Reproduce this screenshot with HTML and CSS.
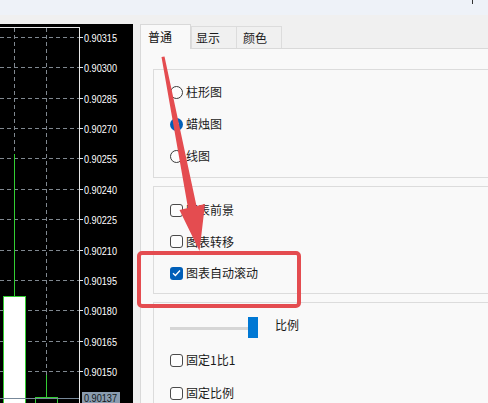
FILE: index.html
```html
<!DOCTYPE html>
<html lang="zh-CN">
<head>
<meta charset="utf-8">
<title>图表属性</title>
<link rel="stylesheet" href="styles.css">
</head>
<body>
<div class="topbar"><span class="topmark"></span></div>
<div class="main">
  <div class="chart">
    <svg width="133" height="379" viewBox="0 0 133 379" xmlns="http://www.w3.org/2000/svg">
      <rect x="0" y="0" width="133" height="379" fill="#000"/>
      <g stroke="#808890" stroke-width="1" stroke-dasharray="4 3">
        <line x1="0" y1="13.5" x2="79" y2="13.5"/>
        <line x1="0" y1="43.5" x2="79" y2="43.5"/>
        <line x1="0" y1="74.5" x2="79" y2="74.5"/>
        <line x1="0" y1="104.5" x2="79" y2="104.5"/>
        <line x1="0" y1="134.5" x2="79" y2="134.5"/>
        <line x1="0" y1="165.5" x2="79" y2="165.5"/>
        <line x1="0" y1="195.5" x2="79" y2="195.5"/>
        <line x1="0" y1="226.5" x2="79" y2="226.5"/>
        <line x1="0" y1="256.5" x2="79" y2="256.5"/>
        <line x1="0" y1="286.5" x2="79" y2="286.5"/>
        <line x1="0" y1="317.5" x2="79" y2="317.5"/>
        <line x1="0" y1="347.5" x2="79" y2="347.5"/>
        <line x1="14.5" y1="4" x2="14.5" y2="379"/>
        <line x1="46.5" y1="4" x2="46.5" y2="379"/>
      </g>
      <g stroke="#32cd32" stroke-width="1">
        <line x1="14.5" y1="130" x2="14.5" y2="272"/>
        <rect x="3.5" y="272.5" width="22" height="120" fill="#fff"/>
        <line x1="46.5" y1="351" x2="46.5" y2="373"/>
        <rect x="35.5" y="373.5" width="22" height="20" fill="#000"/>
      </g>
      <line x1="0" y1="374.5" x2="79" y2="374.5" stroke="#778899"/>
      <g stroke="#e8e8e8" stroke-width="1">
        <line x1="0" y1="3.5" x2="80" y2="3.5"/>
        <line x1="79.5" y1="3" x2="79.5" y2="379"/>
        <line x1="79" y1="13.5" x2="83" y2="13.5"/>
        <line x1="79" y1="43.5" x2="83" y2="43.5"/>
        <line x1="79" y1="74.5" x2="83" y2="74.5"/>
        <line x1="79" y1="104.5" x2="83" y2="104.5"/>
        <line x1="79" y1="134.5" x2="83" y2="134.5"/>
        <line x1="79" y1="165.5" x2="83" y2="165.5"/>
        <line x1="79" y1="195.5" x2="83" y2="195.5"/>
        <line x1="79" y1="226.5" x2="83" y2="226.5"/>
        <line x1="79" y1="256.5" x2="83" y2="256.5"/>
        <line x1="79" y1="286.5" x2="83" y2="286.5"/>
        <line x1="79" y1="317.5" x2="83" y2="317.5"/>
        <line x1="79" y1="347.5" x2="83" y2="347.5"/>
      </g>
      <g fill="#fff" font-family="Liberation Sans, Arial, sans-serif" font-size="10">
        <text x="84" y="17.5" textLength="33" lengthAdjust="spacingAndGlyphs">0.90315</text>
        <text x="84" y="47.5" textLength="33" lengthAdjust="spacingAndGlyphs">0.90300</text>
        <text x="84" y="78.5" textLength="33" lengthAdjust="spacingAndGlyphs">0.90285</text>
        <text x="84" y="108.5" textLength="33" lengthAdjust="spacingAndGlyphs">0.90270</text>
        <text x="84" y="138.5" textLength="33" lengthAdjust="spacingAndGlyphs">0.90255</text>
        <text x="84" y="169.5" textLength="33" lengthAdjust="spacingAndGlyphs">0.90240</text>
        <text x="84" y="199.5" textLength="33" lengthAdjust="spacingAndGlyphs">0.90225</text>
        <text x="84" y="230.5" textLength="33" lengthAdjust="spacingAndGlyphs">0.90210</text>
        <text x="84" y="260.5" textLength="33" lengthAdjust="spacingAndGlyphs">0.90195</text>
        <text x="84" y="290.5" textLength="33" lengthAdjust="spacingAndGlyphs">0.90180</text>
        <text x="84" y="321.5" textLength="33" lengthAdjust="spacingAndGlyphs">0.90165</text>
        <text x="84" y="351.5" textLength="33" lengthAdjust="spacingAndGlyphs">0.90150</text>
      </g>
      <rect x="82" y="368" width="38" height="11" fill="#8a9caf"/>
      <text x="84" y="378" fill="#101820" font-family="Liberation Sans, Arial, sans-serif" font-size="10" textLength="33" lengthAdjust="spacingAndGlyphs">0.90137</text>
    </svg>
  </div>
  <div class="dialog">
    <div class="tabs">
      <div class="tab tab-active">普通</div>
      <div class="tab tab-2">显示</div>
      <div class="tab tab-3">颜色</div>
    </div>
    <div class="panel">
      <div class="group group-type">
        <div class="opt"><span class="radio"></span><span class="label">柱形图</span></div>
        <div class="opt"><span class="radio radio-on"></span><span class="label">蜡烛图</span></div>
        <div class="opt"><span class="radio"></span><span class="label">线图</span></div>
      </div>
      <div class="group group-flags">
        <div class="opt"><span class="check"></span><span class="label">图表前景</span></div>
        <div class="opt"><span class="check"></span><span class="label">图表转移</span></div>
        <div class="opt"><span class="check check-on"><svg width="9" height="8" viewBox="0 0 9 8"><path d="M1 4.2 L3.4 6.5 L8 1.5" fill="none" stroke="#fff" stroke-width="1.3"/></svg></span><span class="label">图表自动滚动</span></div>
      </div>
      <div class="group group-scale">
        <div class="slider-row">
          <div class="slider"><span class="track"></span><span class="thumb"></span></div>
          <span class="label slider-label">比例</span>
        </div>
        <div class="opt opt-fix1"><span class="check"></span><span class="label">固定1比1</span></div>
        <div class="opt opt-fix2"><span class="check"></span><span class="label">固定比例</span></div>
      </div>
    </div>
  </div>
</div>
<svg class="annot" width="488" height="403" viewBox="0 0 488 403" xmlns="http://www.w3.org/2000/svg">
  <rect x="139" y="253" width="160" height="53" rx="3" fill="none" stroke="#e44c50" stroke-width="4"/>
  <polygon points="161.5,57 164.5,56.5 196.5,206 205,204 199.5,251 179.5,210 188,208" fill="#e44c50"/>
</svg>
</body>
</html>
```
FILE: styles.css
```css
html, body {
  margin: 0;
  padding: 0;
}
body {
  width: 488px;
  height: 403px;
  overflow: hidden;
  background: #f0f0f0;
  font-family: "Noto Sans CJK SC", "Noto Sans", sans-serif;
  font-size: 12px;
  color: #1a1a1a;
  position: relative;
}
.topbar {
  height: 15px;
  background: #eef2f8;
  display: flex;
  padding-left: 472px;
  box-sizing: border-box;
}
.topmark {
  width: 1px;
  height: 4px;
  background: #333;
}
.main {
  display: flex;
  height: 388px;
}
.chart {
  width: 133px;
  height: 379px;
  margin-top: 9px;
  background: #000;
  flex: none;
}
.chart svg {
  display: block;
}
.dialog {
  margin-left: 7px;
  margin-top: 9px;
  flex: 1;
  min-width: 0;
  display: flex;
  flex-direction: column;
}
.tabs {
  display: flex;
  align-items: flex-end;
  height: 24px;
  flex: none;
}
.tab {
  box-sizing: border-box;
  height: 22px;
  border: 1px solid #dcdcdc;
  border-bottom: none;
  background: #f0f0f0;
  display: flex;
  align-items: center;
  padding-left: 6px;
  line-height: 16px;
}
.tab-active {
  width: 51px;
  height: 25px;
  margin-bottom: -1px;
  background: #f9f9f9;
  border-color: #d9d9d9;
  padding-left: 7px;
  position: relative;
  z-index: 1;
  color: #111;
}
.tab-2 {
  width: 46px;
  padding-left: 4px;
}
.tab-3 {
  width: 46px;
  margin-left: -1px;
}
.panel {
  flex: 1;
  background: #f9f9f9;
  border-top: 1px solid #d9d9d9;
  border-left: 1px solid #d9d9d9;
  padding: 20px 0 0 12px;
  overflow: hidden;
}
.group {
  box-sizing: border-box;
  width: 420px;
  border: 1px solid #dcdcdc;
  padding-left: 16px;
  display: flex;
  flex-direction: column;
}
.group-type {
  height: 109px;
  padding-top: 14px;
  gap: 16px;
}
.group-flags {
  height: 108px;
  margin-top: 8px;
  padding-top: 15px;
  gap: 15.5px;
}
.group-scale {
  height: 120px;
  margin-top: 8px;
  padding-top: 14px;
}
.opt {
  display: flex;
  align-items: center;
  height: 16px;
  gap: 3px;
  line-height: 16px;
}
.radio {
  box-sizing: border-box;
  width: 13px;
  height: 13px;
  border-radius: 50%;
  border: 1px solid #3a3a3a;
  background: #fdfdfd;
  flex: none;
}
.radio-on {
  border: none;
  background: #005fb8;
  display: flex;
  align-items: center;
  justify-content: center;
}
.radio-on::after {
  content: "";
  width: 5px;
  height: 5px;
  border-radius: 50%;
  background: #fff;
}
.check {
  box-sizing: border-box;
  width: 13px;
  height: 13px;
  border-radius: 3px;
  border: 1px solid #4a4a4a;
  background: #fdfdfd;
  flex: none;
  display: flex;
  align-items: center;
  justify-content: center;
}
.check-on {
  border: none;
  background: #005fb8;
}
.check-on svg {
  display: block;
}
.slider-row {
  display: flex;
  align-items: center;
  height: 21px;
}
.slider {
  position: relative;
  width: 88px;
  height: 21px;
  display: flex;
  align-items: center;
}
.track {
  width: 88px;
  height: 3px;
  background: #d6d6d6;
  margin-top: 2px;
}
.thumb {
  position: absolute;
  right: 0;
  top: 0;
  width: 10px;
  height: 21px;
  background: #0078d4;
}
.slider-label {
  margin-left: 17px;
  margin-top: -6px;
}
.opt-fix1 {
  margin-top: 14px;
}
.opt-fix2 {
  margin-top: 17px;
}
.annot {
  position: absolute;
  left: 0;
  top: 0;
  pointer-events: none;
}
```
